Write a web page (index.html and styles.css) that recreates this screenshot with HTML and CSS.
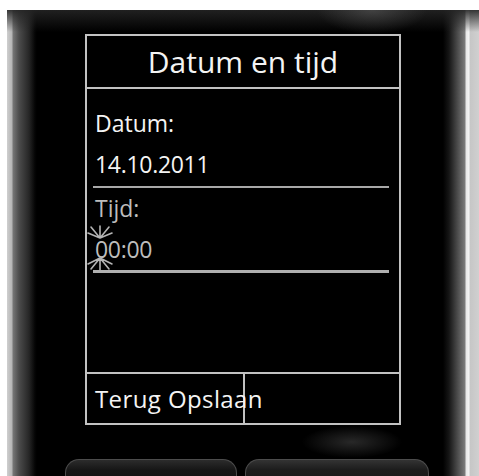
FILE: index.html
```html
<!DOCTYPE html>
<html lang="nl">
<head>
<meta charset="utf-8">
<title>Datum en tijd</title>
<link rel="stylesheet" href="styles.css">
</head>
<body>
<div class="phone">
  <div class="screen">
    <div class="title">Datum en tijd</div>
    <div class="content">
      <div class="row first">Datum:</div>
      <div class="row digits">14.10.2011</div>
      <div class="rule"></div>
      <div class="row dim">Tijd:</div>
      <div class="row dim edit digits">
        <svg class="cursor" viewBox="0 0 28 48" width="28" height="48" aria-hidden="true">
          <g stroke="#b4b4b4" stroke-width="1.6" stroke-linecap="round" fill="none">
            <path d="M14 14 L14 2 M14 14 L5 3 M14 14 L23 3 M14 14 L2 9 M14 14 L26 9"/>
            <path d="M14 34 L14 46 M14 34 L5 45 M14 34 L23 45 M14 34 L2 40 M14 34 L26 40"/>
          </g>
        </svg>00:00</div>
      <div class="rule thick"></div>
    </div>
    <div class="softkeys">
      <div class="sk left"><span class="sk-text">Terug Opslaan</span></div>
      <div class="sk right"></div>
    </div>
  </div>
  <div class="keys">
    <div class="key key-left"></div>
    <div class="key key-right"></div>
  </div>
</div>
</body>
</html>
```

FILE: styles.css
```css
html, body {
  margin: 0;
  padding: 0;
  background: #ffffff;
  overflow: hidden;
}

.phone {
  position: relative;
  margin: 10px 0 0 7px;
  width: 472px;
  height: 466px;
  box-sizing: border-box;
  padding-top: 24px;
  overflow: hidden;
  background:
    radial-gradient(ellipse 55px 24px at 365px 0px, rgba(100,100,100,0.5), rgba(0,0,0,0) 100%),
    radial-gradient(ellipse 50px 16px at 345px 432px, rgba(80,80,80,0.5), rgba(0,0,0,0) 100%),
    linear-gradient(to bottom, rgba(36,36,36,0.9) 0px, rgba(0,0,0,0) 22px),
    linear-gradient(to right,
      #cfcfcf 0px, #b4b4b4 5px, #767676 6px, #4c4c4c 12px, #262626 22px, #050505 28px,
      #000 30px, #000 436px, #161616 442px, #3c3c3c 448px, #6e6e6e 456px, #7c7c7c 458px,
      #e6e6e6 459px, #f4f4f4 462px, #c6c6c6 463px, #d0d0d0 472px);
}

.screen {
  margin-left: 78px;
  width: 316px;
  box-sizing: border-box;
  border: 2px solid #c2c2c2;
  background: #000;
  color: #f4f4f4;
  font-family: "Open Sans", "DejaVu Sans", sans-serif;
}

.title {
  height: 51px;
  line-height: 51px;
  font-size: 30px;
  text-align: center;
  border-bottom: 2px solid #c2c2c2;
}

.content {
  height: 283px;
  box-sizing: border-box;
  padding-top: 14px;
}

.row {
  position: relative;
  padding-left: 8px;
  font-size: 23px;
  line-height: 41px;
  height: 41px;
  white-space: nowrap;
}

.digits {
  letter-spacing: -0.3px;
}

.dim {
  color: #bdbdbd;
}

.rule {
  height: 2px;
  margin: 1px 10px 0 6px;
  background: #a8a8a8;
}

.rule.thick {
  height: 3px;
  margin-top: 0;
  background: #b0b0b0;
}

.cursor {
  position: absolute;
  left: -1px;
  top: -5px;
}

.softkeys {
  display: flex;
  height: 49px;
  border-top: 2px solid #c2c2c2;
}

.sk {
  height: 49px;
}

.sk.left {
  width: 156px;
  border-right: 2px solid #c2c2c2;
}

.sk.right {
  flex: 1;
}

.sk-text {
  display: block;
  padding-left: 8px;
  font-size: 24px;
  letter-spacing: 0.4px;
  line-height: 49px;
  white-space: nowrap;
}

.keys {
  display: flex;
  gap: 8px;
  margin-top: 34px;
  margin-left: 58px;
}

.key {
  height: 30px;
  box-sizing: border-box;
  border: 1px solid #4c4c4c;
  border-bottom: none;
  border-radius: 14px 14px 0 0;
  background: linear-gradient(to bottom, #2c2c2c 0px, #161616 10px, #101010 100%);
}

.key-left {
  width: 172px;
}

.key-right {
  width: 184px;
  background: linear-gradient(to bottom, #333 0px, #1c1c1c 10px, #161616 100%);
}
```
